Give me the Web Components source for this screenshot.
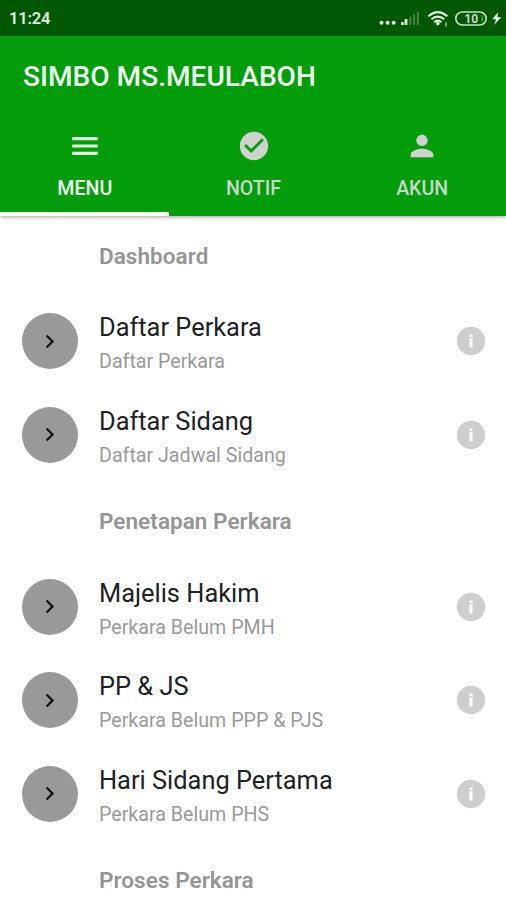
<!DOCTYPE html>
<html lang="id">
<head>
<meta charset="utf-8">
<title>SIMBO MS.MEULABOH</title>
<style>
html, body { margin: 0; height: 900px; overflow: hidden; background: #fff; }
body { font-family: Roboto, "Liberation Sans", sans-serif; }
</style>
</head>
<body>
<simbo-app></simbo-app>
<script>
const define = (name, html) => {
  const template = document.createElement('template');
  template.innerHTML = html;
  customElements.define(name, class extends HTMLElement {
    constructor() {
      super();
      this.attachShadow({ mode: 'open' }).append(template.content.cloneNode(true));
    }
  });
};

define('status-bar', `
<style>
:host { display: flex; box-sizing: border-box; height: 36px; align-items: center; justify-content: space-between; background: #005702; color: #e2f0e2; padding: 0 4px 0 9px; }
time { font-size: 16.5px; line-height: 20px; font-weight: 600; letter-spacing: -.2px; padding-top: 2px; }
svg { display: block; }
</style>
<time>11:24</time>
<svg width="124" height="36" viewBox="378 0 124 36">
  <g fill="#e0f0e0"><circle cx="381.5" cy="22.8" r="2"/><circle cx="387.6" cy="22.8" r="2"/><circle cx="393.7" cy="22.8" r="2"/></g>
  <g fill="#d8ead8"><rect x="401" y="22" width="2.8" height="3"/><rect x="404.6" y="19" width="2.8" height="6"/></g>
  <g fill="#3f833f"><rect x="409.2" y="16.8" width="2.2" height="8.2"/><rect x="413" y="14.2" width="2.2" height="10.8"/><rect x="416.8" y="11.6" width="2.2" height="13.4"/></g>
  <g fill="none" stroke="#e2f0e2" stroke-width="2.1"><path d="M428.3 16.2Q437.8 8.2 447.3 16.2M431.4 19.3Q437.8 13.8 444.2 19.3M434.2 22.1Q437.8 19.2 441.4 22.1"/></g>
  <circle cx="437.8" cy="23.6" r="1.8" fill="#e2f0e2"/>
  <path d="M446 22.5v4" stroke="#a5cda5" stroke-width="1.4"/>
  <rect x="455.8" y="12" width="30.4" height="13" rx="6.5" fill="none" stroke="#c8dfc8" stroke-width="1.7"/>
  <path d="M481.3 14.5v8q2.3-1.2 2.3-4t-2.3-4z" fill="#339f36"/>
  <text x="471.3" y="22.7" text-anchor="middle" font-size="12" font-weight="600" fill="#cfe2cf">10</text>
  <path d="M498.3 12L492.2 19.3H496L494 25L501.4 17.3H497.3Z" fill="#eef7ee"/>
</svg>`);

define('app-tab', `
<style>
:host { flex: 1; display: flex; flex-direction: column; align-items: center; box-sizing: border-box; height: 99px; padding: 12px 0 0 1px; color: #c6d9c6; border-bottom: 4.5px solid transparent; }
:host([active]) { color: #eefaee; border-bottom-color: #fff; }
.label { font-size: 19.6px; line-height: 24px; font-weight: 500; margin-top: 14px; }
</style>
<slot name="icon"></slot>
<span class="label"><slot></slot></span>`);

define('app-header', `
<style>
:host { display: block; position: relative; height: 179.5px; background: #039c0b; box-shadow: 0 1px 4px rgba(0,0,0,.38); }
h1 { margin: 0; height: 81px; box-sizing: border-box; padding: 24px 23px 0; font-size: 28.1px; line-height: 33px; font-weight: 500; color: #edfbed; }
nav { display: flex; }
svg { display: block; width: 34px; height: 34px; }
</style>
<h1><slot></slot></h1>
<nav>
  <app-tab active><svg slot="icon" viewBox="0 0 24 24" fill="#dff5df"><path d="M3 18.3h18v-2.2H3v2.2zm0-5.2h18v-2.2H3v2.2zm0-7.4v2.2h18V5.7H3z"/></svg>MENU</app-tab>
  <app-tab><svg slot="icon" viewBox="0 0 24 24" fill="#cfd2cf"><path d="M12 2C6.48 2 2 6.48 2 12s4.48 10 10 10 10-4.48 10-10S17.52 2 12 2zm-2 15l-5-5 1.41-1.41L10 14.17l7.59-7.59L19 8l-9 9z"/></svg>NOTIF</app-tab>
  <app-tab><svg slot="icon" viewBox="0 0 24 24" fill="#cfd2cf"><path d="M12 12c2.21 0 4-1.79 4-4s-1.79-4-4-4-4 1.79-4 4 1.79 4 4 4zm0 2c-2.67 0-8 1.34-8 4v2h16v-2c0-2.66-5.33-4-8-4z"/></svg>AKUN</app-tab>
</nav>`);

define('section-title', `
<style>
:host { display: flex; align-items: center; box-sizing: border-box; height: 78.5px; padding: 1px 0 0 99px; font-size: 22.5px; font-weight: 600; letter-spacing: .05px; color: #959595; }
</style>
<slot></slot>`);

define('menu-item', `
<style>
:host { display: grid; grid-template-columns: 56px 1fr 34px; column-gap: 21.5px; align-items: center; box-sizing: border-box; height: 93.5px; padding: 0 18px 0 21.5px; }
.disc { width: 56px; height: 56px; border-radius: 50%; background: #999; display: grid; place-items: center; }
.text { display: flex; flex-direction: column; white-space: nowrap; padding-top: 9.2px; }
.title { font-size: 25.4px; line-height: 33px; color: #202124; }
.sub { font-size: 19.65px; line-height: 35.5px; color: #999; }
svg { display: block; }
</style>
<span class="disc"><svg width="27" height="27" viewBox="0 0 24 24"><path d="M8.69 16.59L13.27 12 8.69 7.41 10.1 6l6 6-6 6z" fill="#111"/></svg></span>
<span class="text"><span class="title"><slot></slot></span><span class="sub"><slot name="sub"></slot></span></span>
<svg width="34" height="34" viewBox="0 0 24 24"><circle cx="12" cy="12" r="10" fill="#cecece"/><path d="M10.9 7.4h2.2v1.8h-2.2zM10.9 10.1h2.2v6.4h-2.2z" fill="#fff"/></svg>`);

define('simbo-app', `
<style>
:host { display: block; width: 506px; height: 900px; overflow: hidden; background: #fff; }
main { padding-top: .4px; }
</style>
<status-bar></status-bar>
<app-header>SIMBO MS.MEULABOH</app-header>
<main>
  <section-title>Dashboard</section-title>
  <menu-item>Daftar Perkara<span slot="sub">Daftar Perkara</span></menu-item>
  <menu-item>Daftar Sidang<span slot="sub">Daftar Jadwal Sidang</span></menu-item>
  <section-title>Penetapan Perkara</section-title>
  <menu-item>Majelis Hakim<span slot="sub">Perkara Belum PMH</span></menu-item>
  <menu-item>PP &amp; JS<span slot="sub">Perkara Belum PPP &amp; PJS</span></menu-item>
  <menu-item>Hari Sidang Pertama<span slot="sub">Perkara Belum PHS</span></menu-item>
  <section-title>Proses Perkara</section-title>
</main>`);
</script>
</body>
</html>
